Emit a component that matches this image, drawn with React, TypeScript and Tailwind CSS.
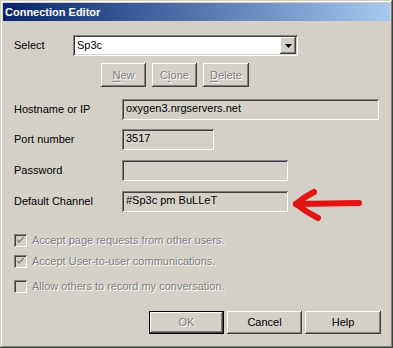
const raised =
  "shadow-[inset_-1px_-1px_#404040,inset_1px_1px_#ffffff,inset_-2px_-2px_#808080,inset_2px_2px_#d4d0c8]";
const sunken =
  "shadow-[inset_1px_1px_#808080,inset_-1px_-1px_#ffffff,inset_2px_2px_#404040,inset_-2px_-2px_#d4d0c8]";
const etched = "text-[#808080] [text-shadow:1px_1px_0_#ffffff]";

function Btn({
  label,
  hot,
  disabled,
  width,
  height,
  isDefault,
}: {
  label: string;
  hot?: number;
  disabled?: boolean;
  width: string;
  height: string;
  isDefault?: boolean;
}) {
  const text =
    hot === undefined ? (
      label
    ) : (
      <>
        {label.slice(0, hot)}
        <span className="underline underline-offset-[2px]">{label[hot]}</span>
        {label.slice(hot + 1)}
      </>
    );
  const face = (
    <div
      className={`flex h-full w-full items-center justify-center bg-[#d4d0c8] ${raised} ${
        disabled ? etched : "text-black"
      }`}
    >
      {text}
    </div>
  );
  return (
    <div className={`${width} ${height} ${isDefault ? "border border-black" : ""}`}>
      {face}
    </div>
  );
}

function Field({ value, width }: { value: string; width: string }) {
  return (
    <div className={`h-[21px] ${width} bg-[#d4d0c8] pl-[4px] pt-[3px] leading-[13px] text-black ${sunken}`}>
      {value}
    </div>
  );
}

function Check({ label, checked }: { label: string; checked?: boolean }) {
  return (
    <div className="flex h-[13px] items-center">
      <div className={`flex h-[13px] w-[13px] items-center justify-center bg-[#d4d0c8] ${sunken}`}>
        {checked && (
          <svg width="7" height="7" viewBox="0 0 7 7">
            <path d="M0 2 L0 4 L2 6 L7 1 L7 -1 L2 4 Z" fill="#808080" />
          </svg>
        )}
      </div>
      <span className={`ml-[5px] ${etched}`}>{label}</span>
    </div>
  );
}

export default function App() {
  return (
    <div
      className={`relative flex h-[348px] w-[393px] flex-col bg-[#d4d0c8] p-[3px] font-['Liberation_Sans',Arial,sans-serif] text-[11px] text-black shadow-[inset_-1px_-1px_#404040,inset_1px_1px_#d4d0c8,inset_-2px_-2px_#808080,inset_2px_2px_#ffffff]`}
    >
      {/* Title bar */}
      <div className="flex h-[18px] items-center bg-linear-to-r from-[#0a246a] to-[#a6caf0] pl-[2px] text-[11px] font-bold text-white">
        Connection Editor
      </div>

      <div className="flex flex-col pl-[11px]">
        {/* Select */}
        <div className="mt-[14px] flex h-[21px] items-center">
          <span className="w-[59px]">Select</span>
          <div className={`flex h-[21px] w-[225px] items-center bg-white p-[2px] ${sunken}`}>
            <span className="flex-1 pl-[2px]">Sp3c</span>
            <div className={`flex h-[17px] w-[16px] items-center justify-center bg-[#d4d0c8] ${raised}`}>
              <svg width="7" height="4" viewBox="0 0 7 4">
                <path d="M0 0 H7 L3.5 4 Z" fill="#000" />
              </svg>
            </div>
          </div>
        </div>

        <div className="ml-[87px] mt-[7px] flex gap-[6px]">
          <Btn label="New" hot={0} disabled width="w-[45px]" height="h-[24px]" />
          <Btn label="Clone" hot={1} disabled width="w-[45px]" height="h-[24px]" />
          <Btn label="Delete" hot={0} disabled width="w-[46px]" height="h-[24px]" />
        </div>

        {/* Fields */}
        <div className="mt-[12px] flex items-center">
          <span className="w-[108px]">Hostname or IP</span>
          <Field value="oxygen3.nrgservers.net" width="w-[257px]" />
        </div>
        <div className="mt-[9px] flex items-center">
          <span className="w-[108px]">Port number</span>
          <Field value="3517" width="w-[92px]" />
        </div>
        <div className="mt-[10px] flex items-center">
          <span className="w-[108px]">Password</span>
          <Field value="" width="w-[166px]" />
        </div>
        <div className="mt-[10px] flex items-center">
          <span className="w-[108px]">Default Channel</span>
          <Field value="#Sp3c pm BuLLeT" width="w-[166px]" />
        </div>

        {/* Options */}
        <div className="mt-[22px] flex flex-col">
          <Check label="Accept page requests from other users." checked />
          <div className="mt-[8px]">
            <Check label="Accept User-to-user communications." checked />
          </div>
          <div className="mt-[12px]">
            <Check label="Allow others to record my conversation." />
          </div>
        </div>

        {/* Footer buttons */}
        <div className="ml-[135px] mt-[18px] flex gap-[3px]">
          <Btn label="OK" disabled isDefault width="w-[75px]" height="h-[23px]" />
          <Btn label="Cancel" width="w-[75px]" height="h-[23px]" />
          <Btn label="Help" width="w-[76px]" height="h-[23px]" />
        </div>
      </div>

      {/* Red annotation arrow */}
      <svg
        className="absolute left-[286px] top-[186px]"
        width="80"
        height="38"
        viewBox="286 186 80 38"
      >
        <g stroke="#e21414" strokeWidth="6" strokeLinecap="round" strokeLinejoin="round" fill="none">
          <path d="M296 204 L359 203" />
          <path d="M296 204 Q304 197 314 192" />
          <path d="M296 204 Q306 212 318 218" />
        </g>
      </svg>
    </div>
  );
}
